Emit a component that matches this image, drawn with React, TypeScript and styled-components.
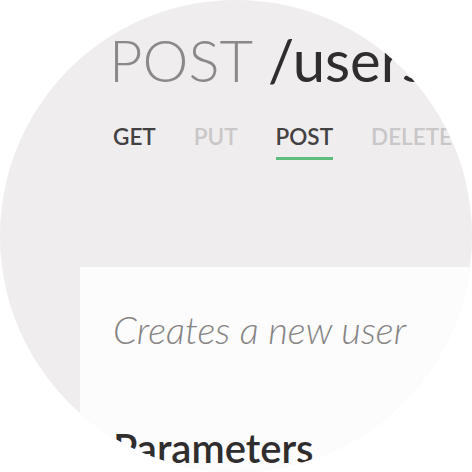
import styled, { createGlobalStyle } from "styled-components";

const GlobalStyle = createGlobalStyle`
  html, body {
    margin: 0;
    padding: 0;
    background: #ffffff;
  }
  body {
    font-family: "Lato", "Liberation Sans", sans-serif;
  }
`;

const Lens = styled.div`
  width: 472px;
  height: 472px;
  border-radius: 50%;
  overflow: hidden;
  background: #efedee;
  display: flex;
  flex-direction: column;
`;

const Header = styled.header`
  padding: 31px 0 0 112px;
  display: flex;
  flex-direction: column;
`;

const Title = styled.h1`
  margin: 0 0 0 -3px;
  font-size: 58px;
  line-height: 1;
  white-space: nowrap;
  font-weight: 400;
`;

const Method = styled.span`
  font-weight: 300;
  color: #8a8888;
`;

const Path = styled.span`
  font-weight: 400;
  color: #2f2d2e;
`;

const Tabs = styled.nav`
  display: flex;
  gap: 38px;
  margin-top: 37px;
  padding-left: 1px;
`;

const Tab = styled.span<{ $active?: boolean; $muted?: boolean }>`
  font-size: 22.5px;
  line-height: 1;
  font-weight: 600;
  white-space: nowrap;
  padding-bottom: 8px;
  border-bottom: 3px solid ${(p) => (p.$active ? "#5cbd7c" : "transparent")};
  color: ${(p) => (p.$muted ? "#c9c7c8" : "#434142")};
`;

const Card = styled.section`
  margin: 107px 0 0 80px;
  flex: 1;
  background: #fcfcfc;
  padding: 43px 0 0 33px;
  display: flex;
  flex-direction: column;
`;

const Summary = styled.p`
  margin: 0;
  font-size: 38px;
  line-height: 1;
  font-style: italic;
  font-weight: 300;
  color: #868484;
  white-space: nowrap;
`;

const SectionTitle = styled.h2`
  margin: 80px 0 0;
  font-size: 40px;
  line-height: 1;
  font-weight: 600;
  color: #2f2d2e;
  white-space: nowrap;
`;

const tabs = [
  { label: "GET", muted: false },
  { label: "PUT", muted: true },
  { label: "POST", muted: false, active: true },
  { label: "DELETE", muted: true },
];

export default function App() {
  return (
    <>
      <GlobalStyle />
      <Lens>
        <Header>
          <Title>
            <Method>POST</Method> <Path>/users</Path>
          </Title>
          <Tabs>
            {tabs.map((t) => (
              <Tab key={t.label} $active={t.active} $muted={t.muted}>
                {t.label}
              </Tab>
            ))}
          </Tabs>
        </Header>
        <Card>
          <Summary>Creates a new user</Summary>
          <SectionTitle>Parameters</SectionTitle>
        </Card>
      </Lens>
    </>
  );
}
